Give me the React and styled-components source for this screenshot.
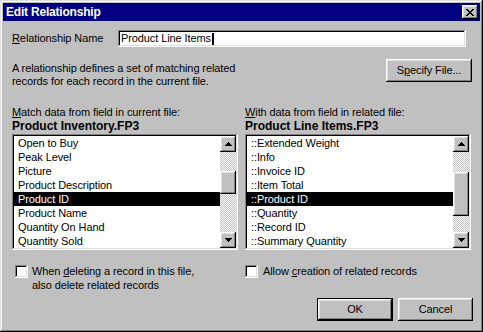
import React from "react";
import styled, { createGlobalStyle, css } from "styled-components";

const GlobalStyle = createGlobalStyle`
  html, body { margin: 0; padding: 0; background: #c0c0c0; }
  body { font-family: "Liberation Sans", Arial, sans-serif; font-size: 11px; letter-spacing: -0.1px; color: #000; }
  * { box-sizing: border-box; }
`;

const raised = css`
  background: #c0c0c0;
  box-shadow: inset -1px -1px #000, inset 1px 1px #fff, inset -2px -2px #808080, inset 2px 2px #dfdfdf;
`;

const sunken = css`
  background: #fff;
  box-shadow: inset -1px -1px #fff, inset 1px 1px #808080, inset -2px -2px #dfdfdf, inset 2px 2px #000;
`;

const Window = styled.div`
  width: 483px;
  height: 332px;
  padding: 3px;
  background: #c0c0c0;
  box-shadow: inset -1px -1px #000, inset 1px 1px #dfdfdf, inset -2px -2px #808080, inset 2px 2px #fff;
  display: flex;
  flex-direction: column;
`;

const TitleBar = styled.div`
  height: 18px;
  background: #000080;
  display: flex;
  align-items: center;
  justify-content: space-between;
  padding: 0 2px 0 3px;
`;

const Title = styled.span`
  color: #fff;
  font-weight: bold;
  font-size: 12px;
  letter-spacing: -0.2px;
  line-height: 14px;
`;

const CloseButton = styled.div`
  ${raised};
  width: 16px;
  height: 14px;
  display: flex;
  align-items: center;
  justify-content: center;
  padding-right: 1px;
  svg { display: block; }
`;

const Body = styled.div`
  padding: 9px 9px 0 9px;
  display: flex;
  flex-direction: column;
`;

const NameRow = styled.div`
  display: flex;
  align-items: center;
  height: 17px;
  padding-right: 5px;
`;

const Label = styled.span`
  width: 106px;
  line-height: 13px;
`;

const TextField = styled.div`
  ${sunken};
  flex: 1;
  height: 17px;
  padding: 2px 3px;
  line-height: 13px;
  display: flex;
  align-items: center;
  white-space: nowrap;
`;

const Caret = styled.span`
  display: inline-block;
  width: 2px;
  height: 12px;
  background: #000;
  margin-left: 1px;
`;

const InfoRow = styled.div`
  display: flex;
  justify-content: space-between;
  align-items: flex-start;
  margin-top: 12px;
  margin-right: -1px;
`;

const Description = styled.p`
  margin: 3px 0 0 0;
  line-height: 13px;
`;

const Button = styled.div`
  ${raised};
  width: ${(p) => p.$w}px;
  height: 23px;
  display: flex;
  align-items: center;
  justify-content: center;
  line-height: 13px;
  ${(p) =>
    p.$default &&
    css`
      box-shadow: inset 0 0 0 1px #000, inset -2px -2px #000, inset 2px 2px #fff,
        inset -3px -3px #808080, inset 3px 3px #dfdfdf;
    `}
`;

const Columns = styled.div`
  display: grid;
  grid-template-columns: 226px 226px;
  column-gap: 7px;
  margin-top: ${(p) => p.$top}px;
`;

const Column = styled.div`
  display: flex;
  flex-direction: column;
`;

const FieldLabel = styled.div`
  line-height: 13px;
`;

const FileName = styled.div`
  line-height: 14px;
  font-size: 12px;
  font-weight: bold;
  letter-spacing: 0;
`;

const ListFrame = styled.div`
  ${sunken};
  margin-top: 1px;
  height: 116px;
  padding: 2px;
  display: flex;
  overflow: hidden;
`;

const Items = styled.div`
  flex: 1;
  display: flex;
  flex-direction: column;
  overflow: hidden;
`;

const Item = styled.div`
  height: 14px;
  flex: none;
  line-height: 14px;
  padding-left: 4px;
  white-space: nowrap;
  background: ${(p) => (p.$selected ? "#000" : "transparent")};
  color: ${(p) => (p.$selected ? "#fff" : "#000")};
`;

const ScrollBar = styled.div`
  width: 16px;
  display: flex;
  flex-direction: column;
`;

const ScrollButton = styled.div`
  ${raised};
  width: 16px;
  height: 16px;
  flex: none;
  display: flex;
  align-items: center;
  justify-content: center;
  svg { display: block; }
`;

const Track = styled.div`
  flex: 1;
  background-color: #fff;
  background-image: repeating-conic-gradient(#c0c0c0 0 25%, #fff 0 50%);
  background-size: 2px 2px;
`;

const Thumb = styled.div`
  ${raised};
  width: 16px;
  height: ${(p) => p.$h}px;
  margin-top: ${(p) => p.$top}px;
`;

const CheckRow = styled.label`
  display: flex;
  align-items: flex-start;
  padding-left: ${(p) => p.$indent}px;
  line-height: 14px;
`;

const CheckBox = styled.span`
  ${sunken};
  width: 13px;
  height: 13px;
  flex: none;
  margin-top: 1px;
  margin-right: ${(p) => p.$gap}px;
`;

const ButtonRow = styled.div`
  display: flex;
  justify-content: flex-end;
  gap: 5px;
  margin-top: 6px;
  margin-right: -2px;
`;

const Arrow = ({ down }) => (
  <svg width="7" height="4" viewBox="0 0 7 4" shapeRendering="crispEdges">
    {[0, 1, 2, 3].map((i) => {
      const row = down ? 3 - i : i;
      return <rect key={i} x={3 - row} y={i} width={row * 2 + 1} height="1" fill="#000" />;
    })}
  </svg>
);

const CloseGlyph = () => {
  const rows = [
    [0, 1, 6, 7],
    [1, 2, 5, 6],
    [2, 3, 4, 5],
    [3, 4],
    [2, 3, 4, 5],
    [1, 2, 5, 6],
    [0, 1, 6, 7],
  ];
  return (
    <svg width="8" height="7" viewBox="0 0 8 7" shapeRendering="crispEdges">
      {rows.map((cols, y) =>
        cols.map((x) => <rect key={`${y}-${x}`} x={x} y={y} width="1" height="1" fill="#000" />)
      )}
    </svg>
  );
};

const ListBox = ({ items, selected, thumbTop, thumbHeight }) => (
  <ListFrame>
    <Items>
      {items.map((it) => (
        <Item key={it} $selected={it === selected}>
          {it}
        </Item>
      ))}
    </Items>
    <ScrollBar>
      <ScrollButton>
        <Arrow />
      </ScrollButton>
      <Track>
        <Thumb $top={thumbTop} $h={thumbHeight} />
      </Track>
      <ScrollButton>
        <Arrow down />
      </ScrollButton>
    </ScrollBar>
  </ListFrame>
);

const leftItems = [
  "Open to Buy",
  "Peak Level",
  "Picture",
  "Product Description",
  "Product ID",
  "Product Name",
  "Quantity On Hand",
  "Quantity Sold",
];

const rightItems = [
  "::Extended Weight",
  "::Info",
  "::Invoice ID",
  "::Item Total",
  "::Product ID",
  "::Quantity",
  "::Record ID",
  "::Summary Quantity",
];

export default function App() {
  return (
    <>
      <GlobalStyle />
      <Window>
        <TitleBar>
          <Title>Edit Relationship</Title>
          <CloseButton>
            <CloseGlyph />
          </CloseButton>
        </TitleBar>
        <Body>
          <NameRow>
            <Label>
              <u>R</u>elationship Name
            </Label>
            <TextField>
              Product Line Items
              <Caret />
            </TextField>
          </NameRow>
          <InfoRow>
            <Description>
              A relationship defines a set of matching related
              <br />
              records for each record in the current file.
            </Description>
            <Button $w={86}>
              <span>
                S<u>p</u>ecify File...
              </span>
            </Button>
          </InfoRow>
          <Columns $top={18}>
            <Column>
              <FieldLabel>
                <u>M</u>atch data from field in current file:
              </FieldLabel>
              <FileName>Product Inventory.FP3</FileName>
              <ListBox items={leftItems} selected="Product ID" thumbTop={19} thumbHeight={23} />
            </Column>
            <Column>
              <FieldLabel>
                <u>W</u>ith data from field in related file:
              </FieldLabel>
              <FileName>Product Line Items.FP3</FileName>
              <ListBox items={rightItems} selected="::Product ID" thumbTop={20} thumbHeight={44} />
            </Column>
          </Columns>
          <Columns $top={14}>
            <CheckRow $indent={3}>
              <CheckBox $gap={4} />
              <span>
                When <u>d</u>eleting a record in this file,
                <br />
                also delete related records
              </span>
            </CheckRow>
            <CheckRow $indent={0}>
              <CheckBox $gap={5} />
              <span>
                Allow <u>c</u>reation of related records
              </span>
            </CheckRow>
          </Columns>
          <ButtonRow>
            <Button $w={76} $default>
              OK
            </Button>
            <Button $w={75}>Cancel</Button>
          </ButtonRow>
        </Body>
      </Window>
    </>
  );
}
